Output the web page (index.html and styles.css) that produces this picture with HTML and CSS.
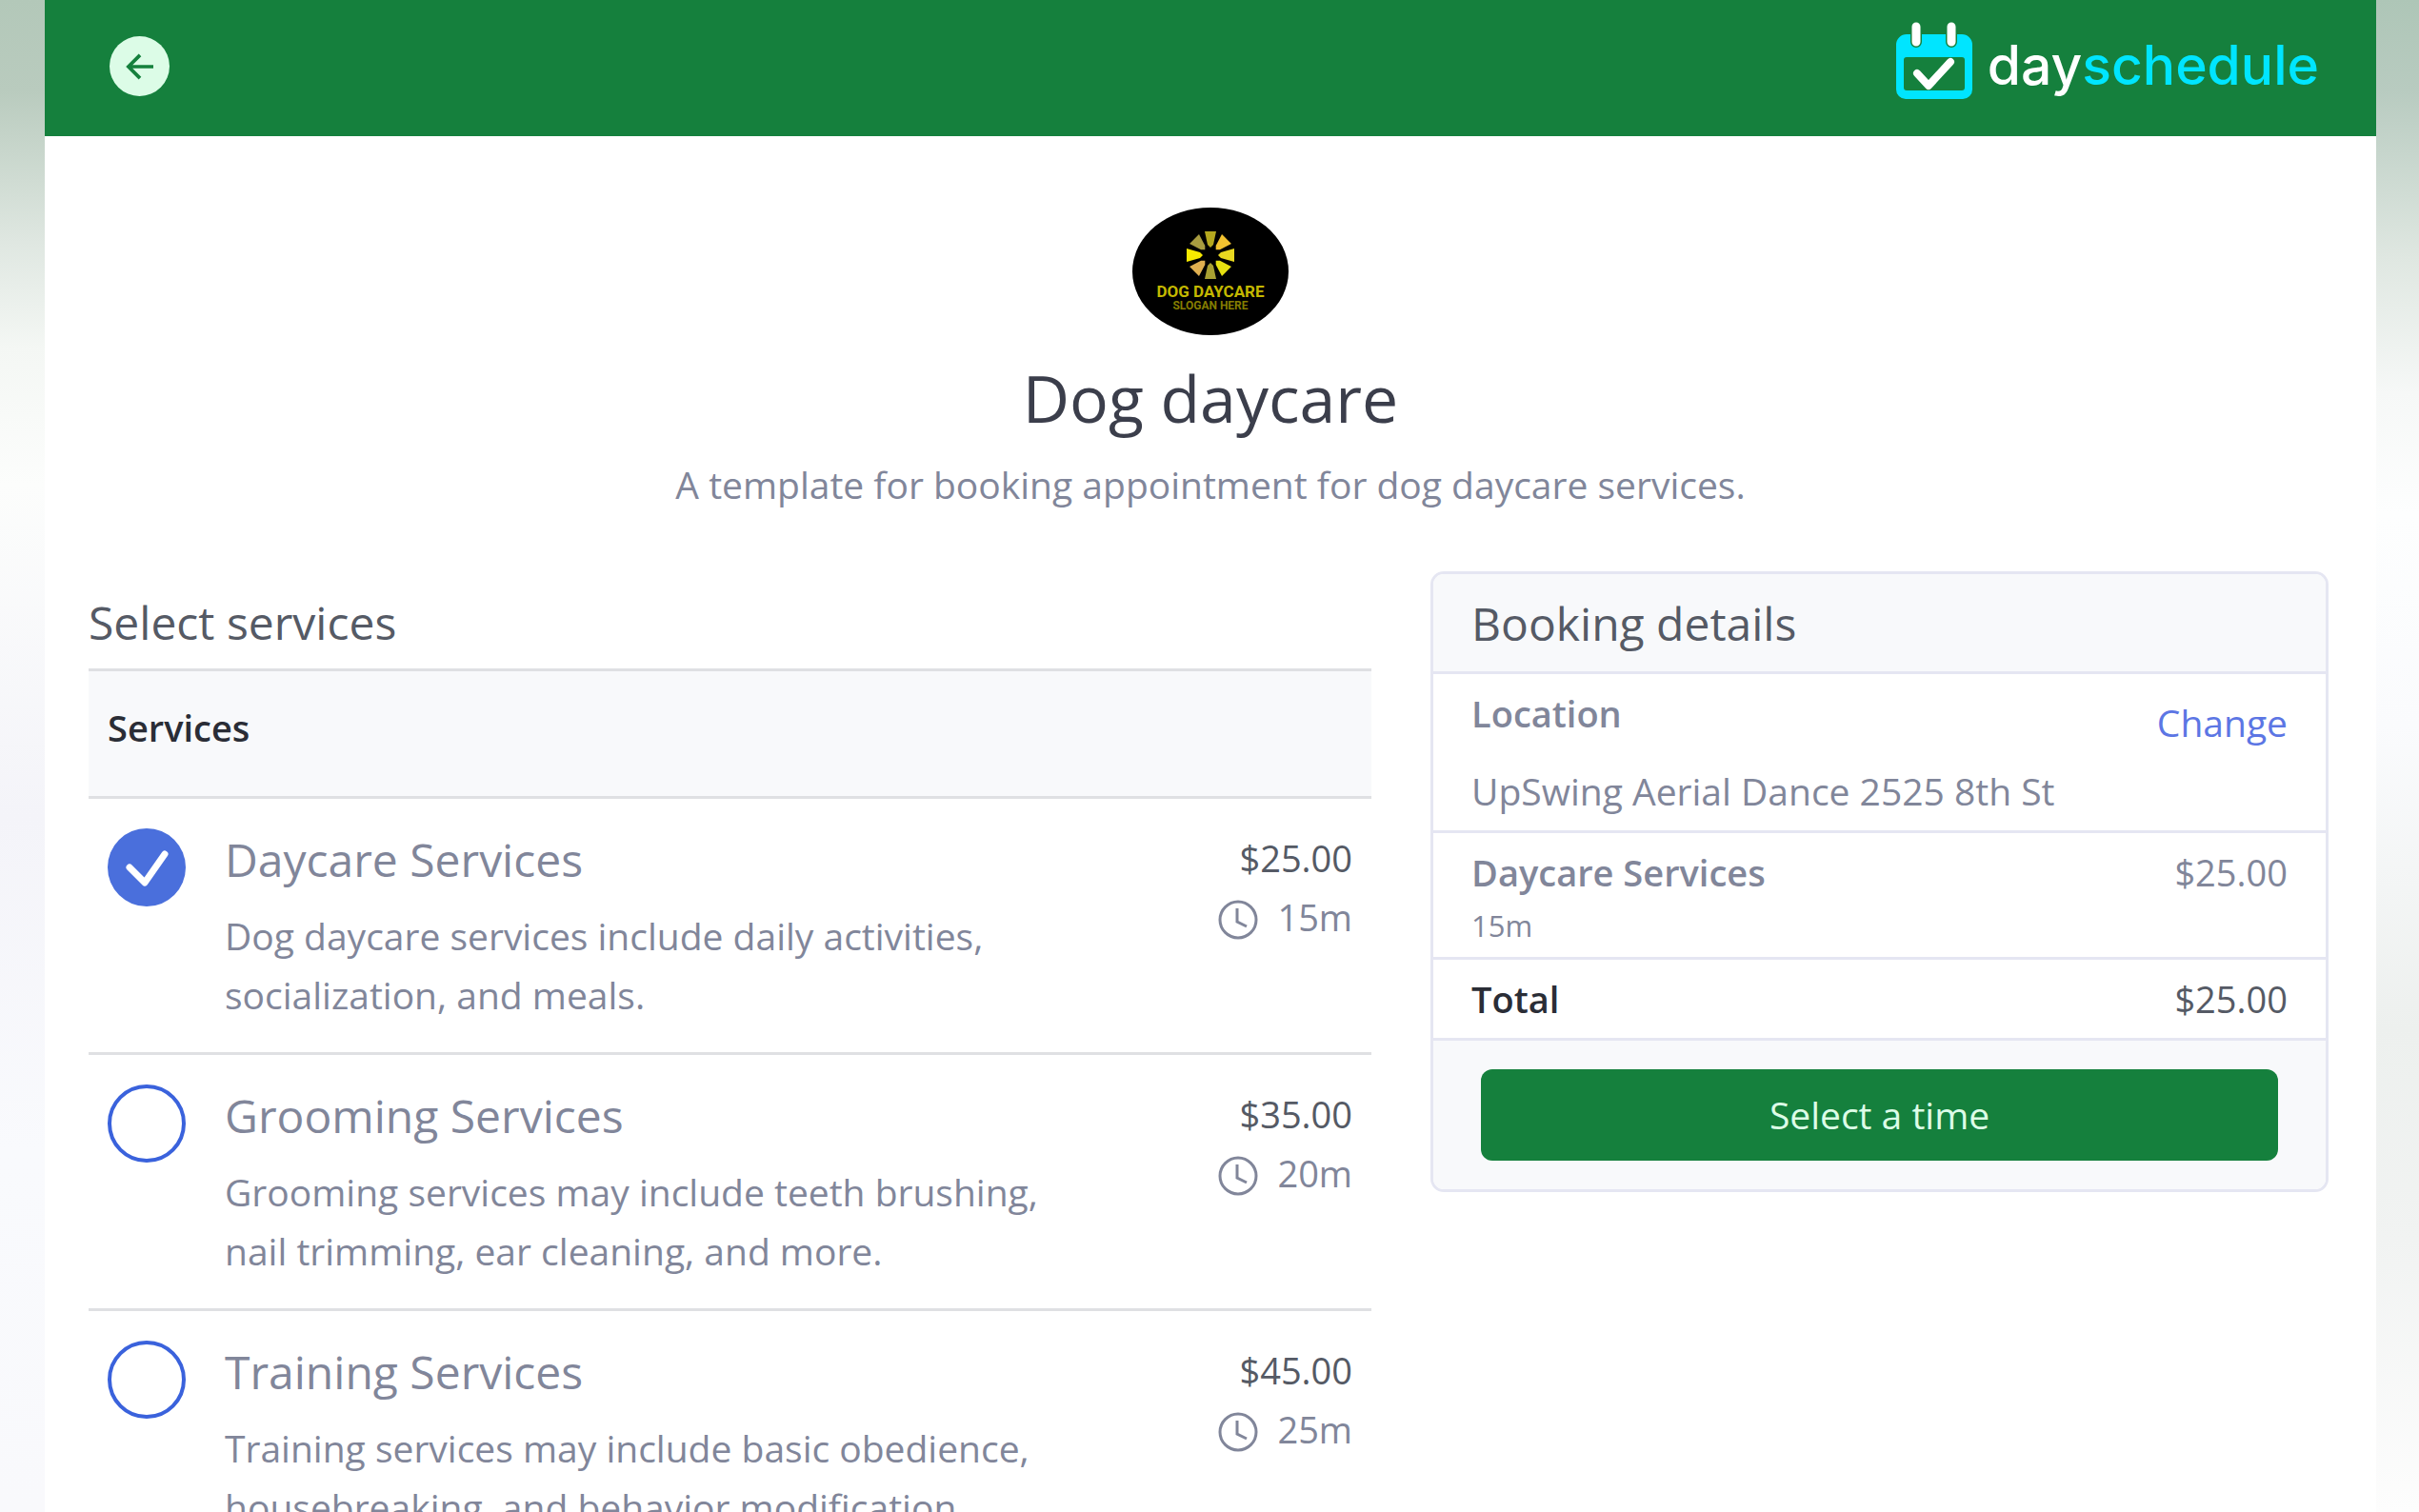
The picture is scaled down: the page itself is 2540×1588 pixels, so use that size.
FILE: index.html
```html
<!DOCTYPE html>
<html lang="en">
<head>
  <meta charset="UTF-8">
  <meta name="viewport" content="width=device-width, initial-scale=1.0">
  <title>Dog daycare</title>
  <link rel="stylesheet" href="styles.css">
</head>
<body>
  <div class="page">
    <header class="topbar">
      <a class="back" href="#" aria-label="Back">
        <svg width="32" height="28" viewBox="0 0 34 30" fill="none" stroke="#15803d" stroke-width="4">
          <path d="M32 15H4M17 2L4 15l13 13" />
        </svg>
      </a>
      <a class="brand" href="#">
        <svg width="82" height="82" viewBox="0 0 82 82">
          <path fill="#00e5ff" fill-rule="evenodd" d="M12 13h58a11 11 0 0 1 11 11v47a10 10 0 0 1-10 10H11A10 10 0 0 1 1 71V24a11 11 0 0 1 11-11zM12 37a3 3 0 0 0-3 3v29a3 3 0 0 0 3 3h58a3 3 0 0 0 3-3V40a3 3 0 0 0-3-3z" />
          <path d="M22 5v16M59 5v16" stroke="#15803d" stroke-width="12" stroke-linecap="round" />
          <path d="M22 5v16M59 5v16" stroke="#fff" stroke-width="9" stroke-linecap="round" />
          <path d="M23 54l12 13 23-25" fill="none" stroke="#fff" stroke-width="8" stroke-linecap="round" stroke-linejoin="round" />
        </svg>
        <span class="brand-name">day<span>schedule</span></span>
      </a>
    </header>

    <section class="intro">
      <svg class="avatar" width="164" height="134" viewBox="0 0 164 134">
        <ellipse cx="82" cy="67" rx="82" ry="67" fill="#000" />
        <g transform="translate(82 50)">
          <path d="M-6-25h12l-3 14-3 3-3-3z" fill="#b5a81e" />
          <path d="M-7-24h14l-4 13-3 3-3-3z" fill="#f2c230" transform="rotate(45)" />
          <path d="M-7-25h14l-4 14-3 3-3-3z" fill="#e8d820" transform="rotate(90)" />
          <path d="M-7-24h14l-4 13-3 3-3-3z" fill="#e6e010" transform="rotate(135)" />
          <path d="M-6-25h12l-3 14-3 3-3-3z" fill="#a8a032" transform="rotate(180)" />
          <path d="M-7-24h14l-4 13-3 3-3-3z" fill="#e0b050" transform="rotate(225)" />
          <path d="M-7-25h14l-4 14-3 3-3-3z" fill="#f8ea00" transform="rotate(270)" />
          <path d="M-7-24h14l-4 13-3 3-3-3z" fill="#a89c40" transform="rotate(315)" />
        </g>
        <text class="avatar-name" x="82" y="94">DOG DAYCARE</text>
        <text class="avatar-slogan" x="82" y="107">SLOGAN HERE</text>
      </svg>
      <h1>Dog daycare</h1>
      <p>A template for booking appointment for dog daycare services.</p>
    </section>

    <main class="content">
      <section class="services">
        <h2>Select services</h2>
        <table>
          <thead>
            <tr><th colspan="3">Services</th></tr>
          </thead>
          <tbody>
            <tr>
              <td class="pick"><input type="checkbox" id="daycare" checked></td>
              <td class="info">
                <label for="daycare">Daycare Services</label>
                <p>Dog daycare services include daily activities, socialization, and meals.</p>
              </td>
              <td class="cost">
                <div>$25.00</div>
                <div class="time"><svg class="clock" viewBox="0 0 42 42"><circle cx="21" cy="21" r="19" /><path d="M20 9v14l10 5" /></svg>15m</div>
              </td>
            </tr>
            <tr>
              <td class="pick"><input type="checkbox" id="grooming"></td>
              <td class="info">
                <label for="grooming">Grooming Services</label>
                <p>Grooming services may include teeth brushing, nail trimming, ear cleaning, and more.</p>
              </td>
              <td class="cost">
                <div>$35.00</div>
                <div class="time"><svg class="clock" viewBox="0 0 42 42"><circle cx="21" cy="21" r="19" /><path d="M20 9v14l10 5" /></svg>20m</div>
              </td>
            </tr>
            <tr>
              <td class="pick"><input type="checkbox" id="training"></td>
              <td class="info">
                <label for="training">Training Services</label>
                <p>Training services may include basic obedience, housebreaking, and behavior modification.</p>
              </td>
              <td class="cost">
                <div>$45.00</div>
                <div class="time"><svg class="clock" viewBox="0 0 42 42"><circle cx="21" cy="21" r="19" /><path d="M20 9v14l10 5" /></svg>25m</div>
              </td>
            </tr>
          </tbody>
        </table>
      </section>

      <aside class="booking">
        <h2>Booking details</h2>
        <div class="line location">
          <div>
            <strong>Location</strong>
            <p>UpSwing Aerial Dance 2525 8th St</p>
          </div>
          <a href="#">Change</a>
        </div>
        <div class="line item">
          <div>
            <strong>Daycare Services</strong>
            <small>15m</small>
          </div>
          <span>$25.00</span>
        </div>
        <div class="line total">
          <strong>Total</strong>
          <span>$25.00</span>
        </div>
        <div class="action">
          <button type="button">Select a time</button>
        </div>
      </aside>
    </main>
  </div>
</body>
</html>
```

FILE: styles.css
```css
* {
  box-sizing: border-box;
}
body {
  margin: 0;
  height: 100vh;
  overflow: hidden;
  padding: 0 45px 0 47px;
  font-family: "Open Sans", "Noto Sans", sans-serif;
  font-size: 39px;
  line-height: 62px;
  color: #81869a;
  background:
    linear-gradient(to bottom, #b3c8b9 0, #b9cbbe 6%, #dfe7e1 16%, #f4f7f4 23%, #fcfdfc 32%, #f4f4f9 54%, #f9fafd 76%, #f9f9fc 100%) left / 50% 100% no-repeat,
    linear-gradient(to bottom, #aec6b7 0, #b8cbc0 6%, #dfe7e1 17%, #f6f8f7 26%, #fdfefe 34%, #fafbfd 48%, #edf0ee 68%, #f1f3f2 82%, #fdfdfd 100%) right / 50% 100% no-repeat;
}
h1, h2, p {
  margin: 0;
  font-weight: 400;
}
a {
  text-decoration: none;
}
.page {
  background: #fff;
  min-height: 100vh;
}
.topbar {
  display: flex;
  justify-content: space-between;
  height: 143px;
  padding: 23px 60px 0 68px;
  background: #15803d;
}
.back {
  display: flex;
  align-items: center;
  justify-content: center;
  width: 63px;
  height: 63px;
  margin-top: 15px;
  border-radius: 50%;
  background: #dcfce7;
}
.brand {
  display: flex;
  gap: 15px;
}
.brand-name {
  font-family: Inter, sans-serif;
  font-size: 57px;
  font-weight: 500;
  line-height: 92px;
  color: #fff;
}
.brand-name span {
  color: #00e5ff;
}
.intro {
  padding-top: 75px;
  text-align: center;
}
.avatar {
  display: block;
  margin: 0 auto;
}
.avatar text {
  font-family: Roboto, sans-serif;
  font-weight: 700;
  text-anchor: middle;
  fill: #c4b800;
}
.avatar .avatar-name {
  font-size: 17px;
}
.avatar .avatar-slogan {
  font-size: 12px;
  fill: #857d00;
}
.intro h1 {
  margin-top: 18px;
  font-size: 68px;
  line-height: 96px;
  color: #3b3e4b;
}
.intro p {
  margin-top: 12px;
}
.content {
  display: grid;
  grid-template-columns: 10fr 7fr;
  align-items: start;
  gap: 62px;
  padding: 60px 50px 0 46px;
}
h2 {
  font-size: 48px;
  line-height: 60px;
  color: #555a65;
}
.services {
  padding-top: 24px;
}
table {
  width: 100%;
  margin-top: 18px;
  border-collapse: collapse;
}
th {
  height: 134px;
  padding: 28px 20px;
  vertical-align: top;
  text-align: left;
  font-size: 38px;
  font-weight: 600;
  color: #2a2d36;
  background: #f8f9fb;
}
tr {
  border-top: 3px solid #dfe0e3;
}
td {
  height: 269px;
  padding: 31px 20px 0;
  vertical-align: top;
}
.pick {
  width: 143px;
}
.pick input {
  appearance: none;
  display: block;
  width: 82px;
  height: 82px;
  margin: 0;
  border: 4px solid #3a62dc;
  border-radius: 50%;
  background: #fff;
}
.pick input:checked {
  border: none;
  background: #4a6fdc url("data:image/svg+xml,%3Csvg xmlns='http://www.w3.org/2000/svg' viewBox='0 0 82 82'%3E%3Cpath d='M23 41l16 16 21-30' fill='none' stroke='%23fff' stroke-width='7' stroke-linecap='round' stroke-linejoin='round'/%3E%3C/svg%3E");
}
td.info {
  padding-left: 0;
}
.info label {
  display: block;
  font-size: 48px;
  line-height: 66px;
}
.info p {
  max-width: 880px;
  margin-top: 16px;
}
.cost {
  width: 200px;
  text-align: right;
  font-size: 38px;
  color: #555a65;
}
.time {
  display: flex;
  align-items: center;
  justify-content: flex-end;
  gap: 20px;
  color: #81869a;
}
.clock {
  width: 42px;
  height: 42px;
  margin-top: 6px;
  fill: none;
  stroke: #81869a;
  stroke-width: 3;
}
.booking {
  border: 3px solid #e5e6f2;
  border-radius: 14px;
  overflow: hidden;
  background: #fff;
}
.booking h2 {
  padding: 22px 40px 20px;
  background: #f8f9fb;
}
.line {
  display: flex;
  justify-content: space-between;
  padding: 10px 40px;
  border-top: 3px solid #e5e6f2;
}
.line strong {
  display: block;
  font-size: 38px;
  font-weight: 600;
}
.line span {
  font-size: 38px;
}
.location p {
  margin-top: 20px;
}
.location a {
  padding-top: 10px;
  color: #5c76e4;
}
.item small {
  display: block;
  margin-top: 2px;
  font-size: 31px;
  line-height: 46px;
}
.total {
  color: #555a65;
}
.total strong {
  color: #2a2d36;
}
.action {
  padding: 30px 50px;
  border-top: 3px solid #e5e6f2;
  background: #f8f9fb;
}
.action button {
  display: block;
  width: 100%;
  height: 96px;
  border: none;
  border-radius: 12px;
  font: inherit;
  color: #dcfce7;
  background: #15803d;
}
```
